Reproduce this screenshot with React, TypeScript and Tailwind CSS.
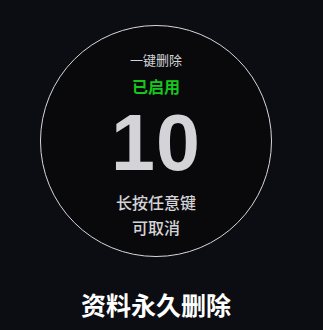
import React from 'react';

const cjk = { fontFamily: '"Noto Sans CJK SC", "Noto Sans", sans-serif' };

export default function App() {
  return (
    <div className="w-[323px] h-[330px] bg-[#0b0d12] flex flex-col items-center pr-[11px] overflow-hidden" style={cjk}>
      {/* countdown ring */}
      <div className="mt-[25px] w-[232px] h-[232px] rounded-full border border-[#d8d8dc] bg-[#09090b] flex flex-col items-center">
        <div className="mt-[25px] text-[13px] leading-[18px] text-[#d4d4d8]">一键删除</div>
        <div className="mt-[6px] text-[16px] leading-[22px] font-bold text-[#16c81c]">已启用</div>
        <div
          className="mt-[7px] text-[79px] leading-[78px] font-bold text-[#d4d4d8] tracking-[1px]"
          style={{ fontFamily: '"Liberation Sans", sans-serif' }}
        >
          10
        </div>
        <div className="mt-[8px] text-[16px] leading-[25px] text-[#d4d4d8] font-medium">长按任意键</div>
        <div className="text-[16px] leading-[25px] text-[#d4d4d8] font-medium">可取消</div>
      </div>
      <div className="mt-[30px] text-[25px] leading-[34px] font-bold text-white">资料永久删除</div>
    </div>
  );
}
